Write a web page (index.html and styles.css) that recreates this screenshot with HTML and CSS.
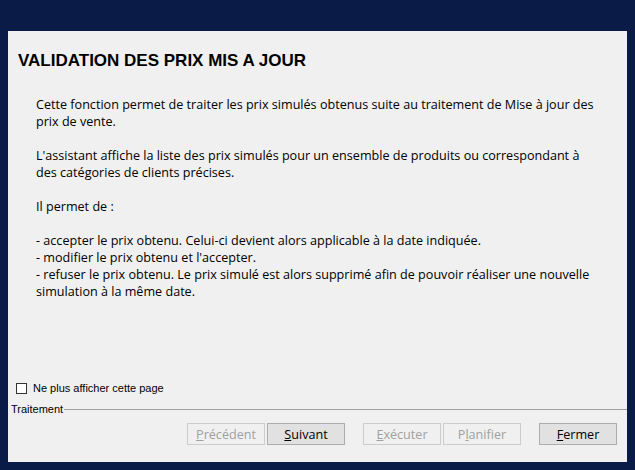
FILE: index.html
```html
<!DOCTYPE html>
<html lang="fr">
<head>
<meta charset="utf-8">
<title>Validation des prix mis à jour</title>
<link rel="stylesheet" href="styles.css">
</head>
<body>
<div class="panel">
  <h1 class="title">VALIDATION DES PRIX MIS A JOUR</h1>
  <div class="body">
    <p>Cette fonction permet de traiter les prix simulés obtenus suite au traitement de Mise à jour des prix de vente.</p>
    <p>L'assistant affiche la liste des prix simulés pour un ensemble de produits ou correspondant à des catégories de clients précises.</p>
    <p>Il permet de :</p>
    <p>- accepter le prix obtenu. Celui-ci devient alors applicable à la date indiquée.<br>- modifier le prix obtenu et l'accepter.<br>- refuser le prix obtenu. Le prix simulé est alors supprimé afin de pouvoir réaliser une nouvelle simulation à la même date.</p>
  </div>
  <div class="spacer"></div>
  <label class="check"><span class="box"></span><span>Ne plus afficher cette page</span></label>
  <div class="group"><span class="group-label">Traitement</span><span class="group-line"></span></div>
  <div class="buttons">
    <button class="btn disabled"><u>P</u>récédent</button>
    <button class="btn"><u>S</u>uivant</button>
    <span class="gap"></span>
    <button class="btn disabled"><u>E</u>xécuter</button>
    <button class="btn disabled">P<u>l</u>anifier</button>
    <span class="gap"></span>
    <button class="btn"><u>F</u>ermer</button>
  </div>
</div>
</body>
</html>
```
FILE: styles.css
```css
html, body {
  margin: 0;
  padding: 0;
}
body {
  background: #0b1b48;
  width: 635px;
  height: 470px;
  overflow: hidden;
  padding: 31px 8px 8px 8px;
  box-sizing: border-box;
}
.panel {
  background: #f0f0f0;
  height: 431px;
  display: flex;
  flex-direction: column;
  box-sizing: border-box;
  padding-bottom: 17px;
}
.title {
  margin: 20px 0 0 10px;
  font-family: "Liberation Sans", Arial, sans-serif;
  font-weight: bold;
  font-size: 17px;
  line-height: 20px;
  color: #000;
}
.body {
  margin: 25px 0 0 28px;
  width: 565px;
  font-family: "Open Sans", "Noto Sans", sans-serif;
  font-size: 12.6px;
  line-height: 17px;
  color: #000;
}
.body p {
  margin: 0 0 17px 0;
}
.spacer {
  flex: 1;
}
.check {
  display: flex;
  align-items: center;
  margin-left: 8px;
  font-family: "Liberation Sans", Arial, sans-serif;
  font-size: 11px;
  color: #000;
  height: 14px;
}
.box {
  width: 11px;
  height: 11px;
  border: 1px solid #333;
  background: #fff;
  box-sizing: border-box;
  margin-right: 6px;
}
.group {
  display: flex;
  align-items: center;
  margin: 7px 0 0 3px;
  height: 14px;
  font-family: "Liberation Sans", Arial, sans-serif;
  font-size: 11px;
  color: #000;
}
.group-line {
  flex: 1;
  height: 1px;
  background: #a0a0a0;
  margin-left: 1px;
}
.buttons {
  display: flex;
  margin: 7px 0 0 179px;
  gap: 2px;
}
.gap { width: 14px; }
.btn {
  width: 78px;
  height: 22px;
  box-sizing: border-box;
  border: 1px solid #adadad;
  background: #e1e1e1;
  font-family: "Open Sans", "Noto Sans", sans-serif;
  font-size: 12.6px;
  color: #000;
  padding: 0;
}
.btn.disabled {
  border-color: #cccccc;
  background: #f0f0f0;
  color: #a0a0a0;
}
```
